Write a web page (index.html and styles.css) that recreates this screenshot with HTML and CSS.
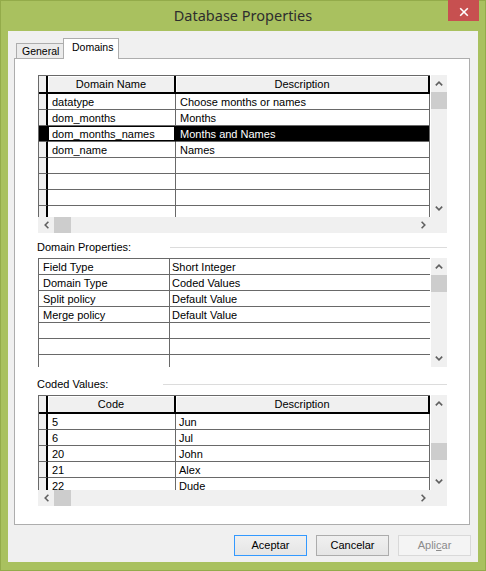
FILE: index.html
```html
<!DOCTYPE html>
<html>
<head>
<meta charset="utf-8">
<title>Database Properties</title>
<link rel="stylesheet" href="styles.css">
</head>
<body>
<div class="window">
  <div class="titlebar">
    <div></div>
    <div class="title">Database Properties</div>
    <div class="caption">
      <div class="close">
        <svg width="10" height="10" viewBox="0 0 10 10"><path d="M1.2 1.2 L8.8 8.8 M8.8 1.2 L1.2 8.8" stroke="#fff" stroke-width="1.6" fill="none"/></svg>
      </div>
    </div>
  </div>
  <div class="client">
    <div class="tabs">
      <div class="tab">General</div>
      <div class="tab tab-active">Domains</div>
    </div>
    <div class="page">
      <div class="block">
        <div class="block-main">
          <div class="grid grid-top">
            <div class="row row-head"><div class="sel sel-head"></div><div class="head">Domain Name</div><div class="head last">Description</div></div>
            <div class="row"><div class="sel"></div><div class="cell">datatype</div><div class="cell last">Choose months or names</div></div>
            <div class="row"><div class="sel"></div><div class="cell">dom_months</div><div class="cell last">Months</div></div>
            <div class="row row-selected"><div class="sel"></div><div class="cell focus">dom_months_names</div><div class="cell last">Months and Names</div></div>
            <div class="row"><div class="sel"></div><div class="cell">dom_name</div><div class="cell last">Names</div></div>
            <div class="row"><div class="sel"></div><div class="cell"></div><div class="cell last"></div></div>
            <div class="row"><div class="sel"></div><div class="cell"></div><div class="cell last"></div></div>
            <div class="row"><div class="sel"></div><div class="cell"></div><div class="cell last"></div></div>
            <div class="row"><div class="sel"></div><div class="cell"></div><div class="cell last"></div></div>
          </div>
          <div class="vscroll">
            <div class="sbtn"><svg width="8" height="5" viewBox="0 0 8 5"><polyline points="0.8,4.4 4,1.2 7.2,4.4" fill="none" stroke="#606060" stroke-width="1.6"/></svg></div>
            <div class="thumb"></div>
            <div class="track"></div>
            <div class="sbtn"><svg width="8" height="5" viewBox="0 0 8 5"><polyline points="0.8,0.6 4,3.8 7.2,0.6" fill="none" stroke="#606060" stroke-width="1.6"/></svg></div>
          </div>
        </div>
        <div class="hscroll">
          <div class="hbtn"><svg width="5" height="8" viewBox="0 0 5 8"><polyline points="4.4,0.8 1.2,4 4.4,7.2" fill="none" stroke="#606060" stroke-width="1.6"/></svg></div>
          <div class="hthumb"></div>
          <div class="track"></div>
          <div class="hbtn"><svg width="5" height="8" viewBox="0 0 5 8"><polyline points="0.6,0.8 3.8,4 0.6,7.2" fill="none" stroke="#606060" stroke-width="1.6"/></svg></div>
          <div class="corner"></div>
        </div>
      </div>

      <div class="section section-props"><span class="section-label">Domain Properties:</span><span class="etch"></span></div>

      <div class="block block-props">
        <div class="block-main">
          <div class="grid grid-props">
            <div class="prow"><div class="cell">Field Type</div><div class="cell c2">Short Integer</div></div>
            <div class="prow"><div class="cell">Domain Type</div><div class="cell c2">Coded Values</div></div>
            <div class="prow"><div class="cell">Split policy</div><div class="cell c2">Default Value</div></div>
            <div class="prow"><div class="cell">Merge policy</div><div class="cell c2">Default Value</div></div>
            <div class="prow"><div class="cell"></div><div class="cell c2"></div></div>
            <div class="prow"><div class="cell"></div><div class="cell c2"></div></div>
            <div class="prow"><div class="cell"></div><div class="cell c2"></div></div>
          </div>
          <div class="vscroll">
            <div class="sbtn"><svg width="8" height="5" viewBox="0 0 8 5"><polyline points="0.8,4.4 4,1.2 7.2,4.4" fill="none" stroke="#606060" stroke-width="1.6"/></svg></div>
            <div class="thumb"></div>
            <div class="track"></div>
            <div class="sbtn"><svg width="8" height="5" viewBox="0 0 8 5"><polyline points="0.8,0.6 4,3.8 7.2,0.6" fill="none" stroke="#606060" stroke-width="1.6"/></svg></div>
          </div>
        </div>
      </div>

      <div class="section section-coded"><span class="section-label">Coded Values:</span><span class="etch"></span></div>

      <div class="block block-coded">
        <div class="block-main">
          <div class="grid grid-coded">
            <div class="row row-head"><div class="sel sel-head"></div><div class="head">Code</div><div class="head last">Description</div></div>
            <div class="row"><div class="sel"></div><div class="cell">5</div><div class="cell last">Jun</div></div>
            <div class="row"><div class="sel"></div><div class="cell">6</div><div class="cell last">Jul</div></div>
            <div class="row"><div class="sel"></div><div class="cell">20</div><div class="cell last">John</div></div>
            <div class="row"><div class="sel"></div><div class="cell">21</div><div class="cell last">Alex</div></div>
            <div class="row"><div class="sel"></div><div class="cell">22</div><div class="cell last">Dude</div></div>
          </div>
          <div class="vscroll">
            <div class="sbtn"><svg width="8" height="5" viewBox="0 0 8 5"><polyline points="0.8,4.4 4,1.2 7.2,4.4" fill="none" stroke="#606060" stroke-width="1.6"/></svg></div>
            <div class="track track-before"></div>
            <div class="thumb"></div>
            <div class="track"></div>
            <div class="sbtn"><svg width="8" height="5" viewBox="0 0 8 5"><polyline points="0.8,0.6 4,3.8 7.2,0.6" fill="none" stroke="#606060" stroke-width="1.6"/></svg></div>
          </div>
        </div>
        <div class="hscroll">
          <div class="hbtn"><svg width="5" height="8" viewBox="0 0 5 8"><polyline points="4.4,0.8 1.2,4 4.4,7.2" fill="none" stroke="#606060" stroke-width="1.6"/></svg></div>
          <div class="hthumb"></div>
          <div class="track"></div>
          <div class="hbtn"><svg width="5" height="8" viewBox="0 0 5 8"><polyline points="0.6,0.8 3.8,4 0.6,7.2" fill="none" stroke="#606060" stroke-width="1.6"/></svg></div>
          <div class="corner"></div>
        </div>
      </div>
    </div>
    <div class="buttons">
      <div class="btn btn-default">Aceptar</div>
      <div class="btn">Cancelar</div>
      <div class="btn btn-disabled">Apli<u>c</u>ar</div>
    </div>
  </div>
</div>
</body>
</html>
```

FILE: styles.css
```css
* { box-sizing: border-box; }
html, body { margin: 0; padding: 0; }
body { background: #a9c15f; font-family: "Liberation Sans", Arial, sans-serif; font-size: 11px; color: #000; }

.window {
  width: 486px; height: 571px;
  background: #a9c15f;
  border: 1px solid #93ab4a;
  display: flex; flex-direction: column;
}

.titlebar {
  height: 30px;
  display: grid;
  grid-template-columns: 1fr auto 1fr;
  align-items: start;
}
.title {
  font-family: "Noto Sans", "Open Sans", sans-serif;
  font-size: 14.5px;
  color: #2e2e2e;
  line-height: 20px;
  padding-top: 4px;
  white-space: nowrap;
}
.caption { display: flex; justify-content: flex-end; padding-right: 6px; }
.close {
  margin-top: -1px;
  width: 31px; height: 21px;
  background: #c75050;
  display: flex; align-items: center; justify-content: center;
  padding-top: 2px;
}

.client {
  margin: 0 7px 8px 7px;
  height: 531px;
  background: #f0f0f0;
  padding: 7px 7px 0 6px;
  display: flex; flex-direction: column;
}

.tabs {
  height: 20px;
  display: flex; align-items: flex-end;
  padding-left: 2px;
  position: relative; z-index: 1;
}
.tab {
  height: 15px;
  padding: 0 6px 0 5px;
  border: 1px solid #adadad; border-bottom: none;
  background: #ebebeb;
  font-size: 10.5px;
  line-height: 15px;
  width: 49px;
}
.tab-active {
  height: 21px;
  margin-bottom: -1px;
  margin-left: -2px;
  width: 56px;
  background: #fff;
  padding: 0 0 0 8px;
  line-height: 17px;
}

.page {
  width: 456px; height: 467px;
  border: 1px solid #adadad;
  background: #fff;
  padding: 16px 0 0 23px;
  display: flex; flex-direction: column;
}

.block { display: flex; flex-direction: column; }
.block-main { display: flex; }

.grid {
  width: 392px;
  height: 142px;
  overflow: hidden;
  border-left: 1px solid #696969;
  border-top: 1px solid #696969;
  margin-right: 1px;
}
.grid-props { height: 109px; }
.grid-coded { height: 95px; }

.row {
  display: grid;
  grid-template-columns: 9px 128px 254px;
  height: 16px;
}
.row-head { height: 18px; }
.sel {
  background: #f0f0f0;
  border-right: 2px solid #000;
  border-bottom: 1px solid #696969;
}
.sel-head { border-bottom: 2px solid #000; }
.head {
  background: #f0f0f0;
  border-right: 2px solid #000;
  border-bottom: 2px solid #000;
  box-shadow: inset 1px 1px 0 #fff;
  text-align: center;
  padding-top: 1px;
  line-height: 15px;
  white-space: nowrap;
}
.cell {
  border-right: 1px solid #696969;
  border-bottom: 1px solid #696969;
  padding-left: 4px;
  padding-top: 1px;
  line-height: 14px;
  white-space: nowrap;
  overflow: hidden;
}
.grid-coded .cell.last { padding-left: 3px; }
.row-selected .sel { background: #000; }
.row-selected .focus { box-shadow: inset 0 0 0 1px #000; border-right-color: #000; }
.row-selected .last { background: #000; color: #fff; }

.prow {
  display: grid;
  grid-template-columns: 131px 260px;
  height: 16px;
}
.prow .c2 { border-right: none; padding-left: 2px; }

.vscroll {
  width: 16px;
  background: #f0f0f0;
  display: flex; flex-direction: column;
}
.sbtn { height: 17px; display: flex; align-items: center; justify-content: center; }
.thumb { height: 17px; background: #cdcdcd; }
.track { flex: 1; }
.track-before { flex: 0 0 31px; }

.hscroll {
  width: 409px; height: 16px;
  background: #f0f0f0;
  display: flex;
}
.hbtn { width: 16px; display: flex; align-items: center; justify-content: center; }
.hthumb { width: 17px; background: #cdcdcd; }
.corner { width: 16px; }

.section {
  display: grid;
  align-items: center;
  margin-left: -1px;
  height: 14px;
  width: 410px;
}
.section-props { margin-top: 7px; margin-bottom: 4px; grid-template-columns: 133px 1fr; }
.section-coded { margin-top: 10px; margin-bottom: 4px; grid-template-columns: 126px 1fr; }
.section-label { white-space: nowrap; line-height: 14px; }
.etch { height: 1px; background: #dcdcdc; }

.buttons {
  margin-top: 10px;
  display: flex; justify-content: flex-end; gap: 9px;
}
.btn {
  width: 73px; height: 21px;
  border: 1px solid #acacac;
  background: linear-gradient(#f0f0f0, #e5e5e5);
  text-align: center;
  line-height: 19px;
}
.btn-default { border-color: #3399ff; }
.btn-disabled { border-color: #d9d9d9; background: #f4f4f4; color: #8b8b8b; }
.btn-disabled u { text-underline-offset: 1px; }
```
